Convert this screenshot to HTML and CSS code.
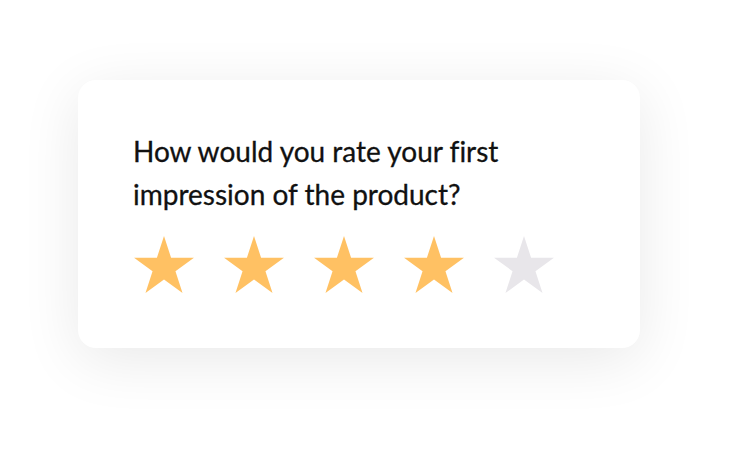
FILE: index.html
```html
<!DOCTYPE html>
<html lang="en">
<head>
<meta charset="utf-8">
<title>Rating</title>
<link rel="stylesheet" href="styles.css">
</head>
<body>
<div class="page">
  <div class="card">
    <p class="question">How would you rate your first<br>impression of the product?</p>
    <div class="stars">
      <svg class="star on" viewBox="0 0 60 58"><path d="M30 0 L37.08 21.76 L59.96 21.77 L41.45 35.22 L48.52 56.98 L30 43.54 L11.48 56.98 L18.55 35.22 L0.04 21.77 L22.92 21.76 Z"/></svg>
      <svg class="star on" viewBox="0 0 60 58"><path d="M30 0 L37.08 21.76 L59.96 21.77 L41.45 35.22 L48.52 56.98 L30 43.54 L11.48 56.98 L18.55 35.22 L0.04 21.77 L22.92 21.76 Z"/></svg>
      <svg class="star on" viewBox="0 0 60 58"><path d="M30 0 L37.08 21.76 L59.96 21.77 L41.45 35.22 L48.52 56.98 L30 43.54 L11.48 56.98 L18.55 35.22 L0.04 21.77 L22.92 21.76 Z"/></svg>
      <svg class="star on" viewBox="0 0 60 58"><path d="M30 0 L37.08 21.76 L59.96 21.77 L41.45 35.22 L48.52 56.98 L30 43.54 L11.48 56.98 L18.55 35.22 L0.04 21.77 L22.92 21.76 Z"/></svg>
      <svg class="star off" viewBox="0 0 60 58"><path d="M30 0 L37.08 21.76 L59.96 21.77 L41.45 35.22 L48.52 56.98 L30 43.54 L11.48 56.98 L18.55 35.22 L0.04 21.77 L22.92 21.76 Z"/></svg>
    </div>
  </div>
</div>
</body>
</html>
```
FILE: styles.css
```css
html, body {
  margin: 0;
  padding: 0;
  background: #ffffff;
}
.page {
  width: 742px;
  height: 449px;
  padding: 80px 0 0 78px;
  box-sizing: border-box;
}
.card {
  width: 562px;
  height: 268px;
  box-sizing: border-box;
  background: #ffffff;
  border-radius: 18px;
  box-shadow: 0 12px 60px rgba(0, 0, 0, 0.09);
  padding: 50px 0 0 55px;
}
.question {
  margin: 0;
  font-family: Lato, "Liberation Sans", sans-serif;
  font-size: 28px;
  line-height: 43px;
  font-weight: 400;
  color: #111111;
  font-variant-ligatures: none;
  -webkit-text-stroke: 0.3px #111111;
}
.stars {
  display: flex;
  gap: 30px;
  margin-top: 20px;
  padding-left: 1px;
}
.star {
  width: 60px;
  height: 58px;
  display: block;
}
.star.on { fill: #ffc163; }
.star.off { fill: #e8e6ea; }
```
